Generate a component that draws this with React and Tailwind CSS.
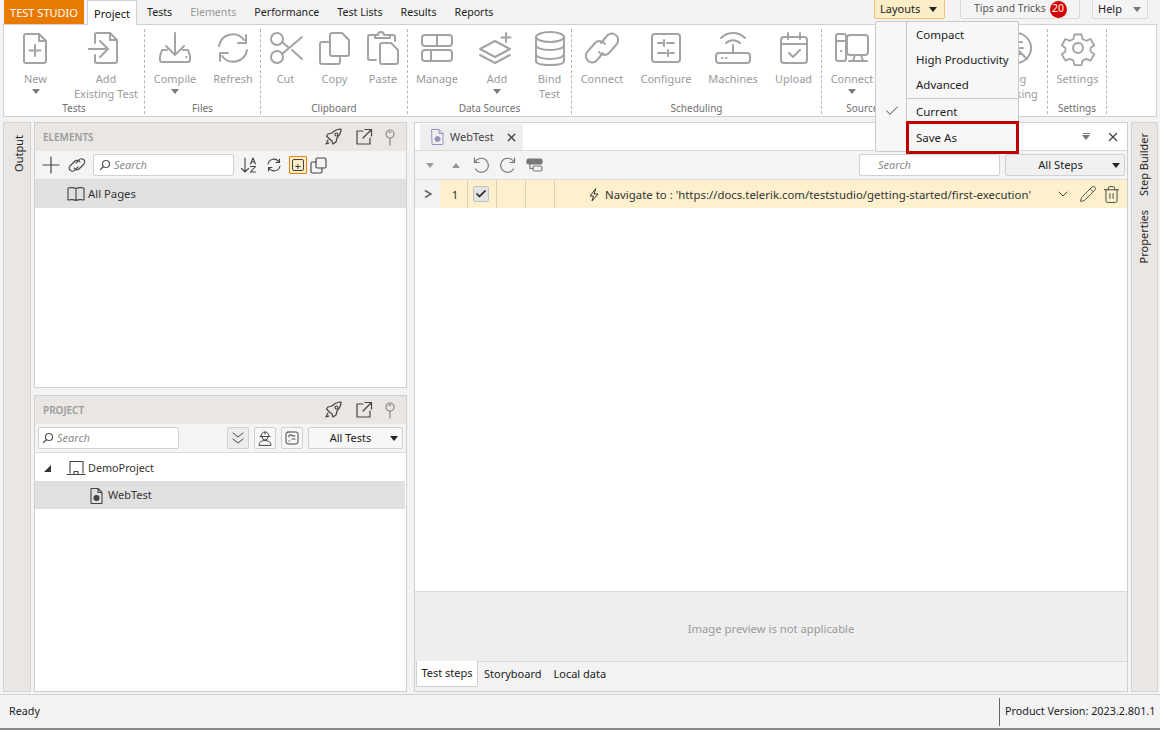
// App.jsx - Test Studio project ribbon with Layouts menu open
import React from "react";
import { ChevronDown, Check, Pencil, Trash2, X } from "lucide-react";

const Icon = ({ children, size = 36, vb = 36, className = "text-[#a3a3a3]", sw = 2 }) => (
  <svg
    width={size}
    height={size}
    viewBox={`0 0 ${vb} ${vb}`}
    fill="none"
    stroke="currentColor"
    strokeWidth={sw}
    strokeLinecap="round"
    strokeLinejoin="round"
    className={className}
  >
    {children}
  </svg>
);

const Caret = ({ className = "border-t-[#777]" }) => (
  <span className={`inline-block w-0 h-0 border-l-[4px] border-r-[4px] border-t-[5px] border-l-transparent border-r-transparent ${className}`} />
);

const icons = {
  new: (
    <>
      <path d="M8 4h13l7 7v20a2 2 0 0 1-2 2H8a2 2 0 0 1-2-2V6a2 2 0 0 1 2-2z" />
      <path d="M21 4v7h7M17 15v11M11.500 20.500h11" />
    </>
  ),
  existing: (
    <>
      <path d="M7 13V5a2 2 0 0 1 2-2h13l7 7v21a2 2 0 0 1-2 2H9a2 2 0 0 1-2-2v-6" />
      <path d="M22 3v7h7M-5 19h24M12 11l8 8-8 8" />
    </>
  ),
  compile: (
    <>
      <path d="M18 3v22M9 16l9 9 9-9" />
      <path d="M10 20H5l-2 6v4a2 2 0 0 0 2 2h26a2 2 0 0 0 2-2v-4l-2-6h-5" />
      <path d="M29 27h.5" />
    </>
  ),
  refresh: (
    <>
      <path d="M4 16A14 14 0 0 1 29 10M32 20A14 14 0 0 1 7 26" />
      <path d="M31 5v8h-8M5 31v-8h8" />
    </>
  ),
  cut: (
    <>
      <circle cx="9" cy="9" r="6" />
      <circle cx="9" cy="27" r="6" />
      <path d="M14 24L34 7M14 12l6 5M24 20l10 9" />
    </>
  ),
  copy: (
    <>
      <path d="M15 3h10l7 7v14a2 2 0 0 1-2 2H15a2 2 0 0 1-2-2V5a2 2 0 0 1 2-2z" />
      <path d="M13 12H5a2 2 0 0 0-2 2v18a2 2 0 0 0 2 2h16a2 2 0 0 0 2-2v-6" />
    </>
  ),
  paste: (
    <>
      <path d="M11 30H5a2 2 0 0 1-2-2V7a2 2 0 0 1 2-2h5M25 5h3a2 2 0 0 1 2 2v4" />
      <path d="M10 8V5h3a3 3 0 0 1 6 0h6v3z" />
      <path d="M17 13h9l7 7v12a2 2 0 0 1-2 2H17a2 2 0 0 1-2-2V15a2 2 0 0 1 2-2z" />
    </>
  ),
  manage: (
    <>
      <rect x="3" y="5" width="30" height="11" rx="3" />
      <rect x="3" y="20" width="30" height="11" rx="3" />
      <path d="M18 5v11M12 20v11" />
    </>
  ),
  add: (
    <>
      <path d="M16 11l15 8-15 8-15-8z" />
      <path d="M1 25l15 8 15-8M27 3v9M22.500 7.500h9" />
    </>
  ),
  bind: (
    <>
      <ellipse cx="18" cy="7" rx="14" ry="5" />
      <path d="M4 7v24c0 3 6 4 14 4s14-1 14-4V7M4 15c0 3 6 5 14 5s14-2 14-5M4 24c0 3 6 5 14 5s14-2 14-5" />
    </>
  ),
  connect: (
    <>
      <path d="M17 13l5-6a6.500 6.500 0 1 1 10 8l-7 8a6.500 6.500 0 0 1-10-1" />
      <path d="M19 23l-5 6a6.500 6.500 0 1 1-10-8l7-8a6.500 6.500 0 0 1 10 1" />
    </>
  ),
  configure: (
    <>
      <rect x="4" y="4" width="28" height="28" rx="3" />
      <path d="M10 13h5M19 13h7M16 10v6M10 23h8M22 23h4M20 20v6" />
    </>
  ),
  machines: (
    <>
      <rect x="1" y="23" width="34" height="10" rx="3" />
      <path d="M18 23v-8M11 13a10 10 0 0 1 14 0M6 8a17 17 0 0 1 24 0M7 28h.5M11 28h.5" />
    </>
  ),
  upload: (
    <>
      <rect x="5" y="7" width="26" height="26" rx="3" />
      <path d="M5 14h26M12 3v6M24 3v6M13 23l4 4 7-7" />
    </>
  ),
  machine: (
    <>
      <rect x="2" y="4" width="10" height="27" rx="2" />
      <path d="M2 11h10M7 21h.5" />
      <rect x="13" y="5" width="21" height="20" rx="3" />
      <path d="M21 25l-2 6M27 25l2 6M15 31h18" />
    </>
  ),
  bug: (
    <>
      <circle cx="18" cy="18" r="15" />
      <path d="M7 7l22 22M18 9v18M12 12l12 0M11 18h14M12 24h12" />
    </>
  ),
  settings: (
    <>
      <path d="M14 3h8l1 5 4 2 5-2 4 7-4 3v4l4 3-4 7-5-2-4 2-1 5h-8l-1-5-4-2-5 2-4-7 4-3v-4l-4-3 4-7 5 2 4-2z" transform="translate(1.800 1.800) scale(.9)" />
      <circle cx="18" cy="18" r="5" />
    </>
  ),
};

const groups = [
  {
    id: "tests",
    label: "Tests",
    width: "w-[141px]",
    items: [
      { icon: "new", lines: ["New"], caret: true, width: "w-[63px]" },
      { icon: "existing", lines: ["Add", "Existing Test"], width: "w-[78px]" },
    ],
  },
  {
    id: "files",
    label: "Files",
    width: "w-[116px]",
    items: [
      { icon: "compile", lines: ["Compile"], caret: true, width: "w-[60px]" },
      { icon: "refresh", lines: ["Refresh"], width: "w-[56px]" },
    ],
  },
  {
    id: "clipboard",
    label: "Clipboard",
    width: "w-[147px]",
    items: [
      { icon: "cut", lines: ["Cut"], width: "w-[49px]" },
      { icon: "copy", lines: ["Copy"], width: "w-[49px]" },
      { icon: "paste", lines: ["Paste"], width: "w-[48px]" },
    ],
  },
  {
    id: "data",
    label: "Data Sources",
    width: "w-[164px]",
    items: [
      { icon: "manage", lines: ["Manage"], width: "w-[58px]" },
      { icon: "add", lines: ["Add"], caret: true, width: "w-[62px]" },
      { icon: "bind", lines: ["Bind", "Test"], width: "w-[43px]" },
    ],
  },
  {
    id: "scheduling",
    label: "Scheduling",
    width: "w-[250px]",
    items: [
      { icon: "connect", lines: ["Connect"], width: "w-[60px]" },
      { icon: "configure", lines: ["Configure"], width: "w-[68px]" },
      { icon: "machines", lines: ["Machines"], width: "w-[66px]" },
      { icon: "upload", lines: ["Upload"], width: "w-[55px]" },
    ],
  },
  {
    id: "source",
    label: "Source Control",
    width: "w-[119px]",
    items: [{ icon: "machine", lines: ["Connect"], caret: true, width: "w-[60px]" }],
  },
  {
    id: "bugs",
    label: "",
    width: "w-[107px]",
    items: [{ icon: "bug", lines: ["Bug", "Tracking"], width: "w-[62px] ml-[44px]" }],
  },
  {
    id: "settings",
    label: "Settings",
    width: "w-[59px]",
    items: [{ icon: "settings", lines: ["Settings"], width: "w-[59px]" }],
  },
];

const tabs = ["Tests", "Elements", "Performance", "Test Lists", "Results", "Reports"];

const Rocket = () => (
  <Icon size={18} vb={18} sw={1.200} className="text-[#444]">
    <path d="M7 5c3-3 6-4 9-4 0 3-1 6-4 9l-1 4-3 2-1-3-3-2.500L1.500 8 3 6z" />
    <circle cx="11.500" cy="6.500" r="1.500" />
    <path d="M3 12l-2 4 3-1" />
  </Icon>
);

const PopOut = () => (
  <Icon size={18} vb={18} sw={1.200} className="text-[#444]">
    <path d="M8 3H2v13h13v-6M10 1.500h6.500V8M16 2L8 10" />
  </Icon>
);

const PinIcon = () => (
  <Icon size={18} vb={18} sw={1.200} className="text-[#888]">
    <circle cx="9" cy="6" r="4" />
    <path d="M9 10v7M8 4.500a2 2 0 0 1 2-.5" />
  </Icon>
);

const PanelHeader = ({ title }) => (
  <div className="h-[28px] shrink-0 flex items-center bg-[#e9e6e3] pl-[8px] pr-[7px]">
    <span className="text-[10px] font-semibold text-[#9b9b9b] flex-1">{title}</span>
    <div className="flex items-center">
      <Rocket />
      <span className="ml-[12px] flex"><PopOut /></span>
      <span className="ml-[8px] flex"><PinIcon /></span>
    </div>
  </div>
);

const SearchBox = ({ width, indent = "pl-[3px]" }) => (
  <div className={`${width} h-[22px] bg-white border border-[#d0d0d0] rounded-[2px] flex items-center ${indent} gap-[3px]`}>
    <Icon size={12} vb={12} sw={1.200} className="text-[#555]">
      <circle cx="7" cy="5" r="3.500" />
      <path d="M4.500 7.500L1.500 10.500" />
    </Icon>
    <span className="text-[11px] italic text-[#8a8a8a]">Search</span>
  </div>
);

const ElementsPanel = () => (
  <section className="h-[266px] shrink-0 bg-white border border-[#cfcfcf] flex flex-col">
    <PanelHeader title="ELEMENTS" />
    <div className="h-[29px] shrink-0 bg-[#f4f4f4] border-b border-[#dcdcdc] flex items-center pl-[7px]">
      <Icon size={18} vb={18} sw={1.200} className="text-[#444]">
        <path d="M9 1v16M1 9h16" />
      </Icon>
      <span className="ml-[7px]">
        <Icon size={20} vb={20} sw={1.100} className="text-[#444]">
          <path d="M9 8l3-3a3.200 3.200 0 1 1 5 4l-5 5a3.200 3.200 0 0 1-5-1" />
          <path d="M11 12l-3 3a3.200 3.200 0 1 1-5-4l5-5a3.200 3.200 0 0 1 5 1" />
        </Icon>
      </span>
      <div className="ml-[6px]"><SearchBox width="w-[141px]" indent="pl-[5px]" /></div>
      <span className="ml-[6px] flex items-center">
        <Icon size={18} vb={18} sw={1.100} className="text-[#444]">
          <path d="M5 2v14M1.500 12.500L5 16l3.500-3.500" />
          <path d="M10.500 8l2.500-6 2.500 6M11.500 6h3M10.500 10.500h5l-5 5.500h5" />
        </Icon>
      </span>
      <span className="ml-[8px] flex items-center">
        <Icon size={16} vb={16} sw={1.100} className="text-[#444]">
          <path d="M2 7a6 6 0 0 1 11-2M14 9a6 6 0 0 1-11 2M13.500 2v3.500H10M2.500 14v-3.500H6" />
        </Icon>
      </span>
      <span className="ml-[7px] w-[18px] h-[18px] border border-[#e8820c] bg-[#fbeec6] rounded-[1px] flex items-center justify-center">
        <span className="w-[12px] h-[12px] border border-[#444] rounded-[2px] flex items-center justify-center text-[11px] leading-none text-[#333]">+</span>
      </span>
      <span className="ml-[3px] flex items-center">
        <Icon size={17} vb={17} sw={1.100} className="text-[#444]">
          <rect x="6" y="1" width="10" height="10" rx="1.500" />
          <path d="M6 5H2.500A1.500 1.500 0 0 0 1 6.500v8A1.500 1.500 0 0 0 2.500 16h8a1.500 1.500 0 0 0 1.500-1.500V11" />
        </Icon>
      </span>
    </div>
    <div className="h-[28px] shrink-0 bg-[#e0e0e0] flex items-center pl-[31px] text-[11.300px] text-[#333]">
      <Icon size={20} vb={20} sw={1.100} className="text-[#444]">
        <path d="M10 4.500C8 3.500 5 3.500 2 4v12c3-.5 6-.5 8 .5 2-1 5-1 8-.5V4c-3-.5-6-.5-8 .5zM10 4.500v12" />
      </Icon>
      <span className="ml-[2px]">All Pages</span>
    </div>
  </section>
);

const ProjectBtn = ({ children, active }) => (
  <span className={`w-[22px] h-[22px] border border-[#d0d0d0] rounded-[2px] flex items-center justify-center ${active ? "bg-[#ececec]" : "bg-[#f7f7f7]"}`}>
    {children}
  </span>
);

const ProjectPanel = () => (
  <section className="flex-1 mt-[7px] bg-white border border-[#cfcfcf] flex flex-col">
    <PanelHeader title="PROJECT" />
    <div className="h-[29px] shrink-0 bg-[#f4f4f4] border-b border-[#dcdcdc] flex items-center pl-[3px]">
      <SearchBox width="w-[141px]" />
      <div className="ml-[48px] flex items-center gap-[5px]">
        <ProjectBtn active>
          <Icon size={16} vb={16} sw={1} className="text-[#444]">
            <path d="M3 3l5 4 5-4M3 9l5 4 5-4" />
          </Icon>
        </ProjectBtn>
        <ProjectBtn>
          <Icon size={18} vb={18} sw={1} className="text-[#444]">
            <path d="M5 7a4 4 0 0 1 8 0M4 7.500h10M6 8a3 3 0 0 0 6 0M3 16c0-3 3-4.500 6-4.500s6 1.500 6 4.500zM9 3v2" />
          </Icon>
        </ProjectBtn>
        <ProjectBtn>
          <Icon size={16} vb={16} sw={1} className="text-[#444]">
            <rect x="2" y="2" width="12" height="12" rx="2" />
            <path d="M5 7V5h3v1h3M5 11h.5M8 9h3" />
          </Icon>
        </ProjectBtn>
        <div className="w-[95px] h-[22px] border border-[#d0d0d0] bg-[#f7f7f7] rounded-[2px] flex items-center text-[11px] text-[#222]">
          <span className="flex-1 text-center pl-[2px]">All Tests</span>
          <span className="mr-[4px] flex"><Caret className="border-t-[#222]" /></span>
        </div>
      </div>
    </div>
    <div className="h-[28px] shrink-0 flex items-center pl-[9px] pt-[2px] text-[10.800px] text-[#333]">
      <span className="w-0 h-0 border-b-[7px] border-l-[7px] border-b-[#333] border-l-transparent" />
      <span className="ml-[15px] flex">
        <Icon size={20} vb={20} sw={1.100} className="text-[#444]">
          <path d="M4 15V3.500h13V15M1 16.500h18M8 16v-2.500h4V16" />
        </Icon>
      </span>
      <span className="ml-[2px]">DemoProject</span>
    </div>
    <div className="h-[28px] shrink-0 bg-[#e0e0e0] mr-[1px] flex items-center pl-[52px] pt-[1px] text-[11px] text-[#333]">
      <Icon size={18} vb={18} sw={1.100} className="text-[#444]">
        <path d="M4 1.500h7l4 4V16a.500.500 0 0 1-.500.500h-10A.500.500 0 0 1 4 16zM11 1.500v4h4" />
        <circle cx="9.500" cy="11" r="2.500" fill="currentColor" />
      </Icon>
      <span className="ml-[3px]">WebTest</span>
    </div>
  </section>
);

const TestStepRow = () => (
  <div className="h-[28px] shrink-0 flex items-stretch text-[11.400px] text-[#333]">
    <div className="w-[25px] bg-[#f3f3f3] flex items-center justify-center text-[#666]">
      <svg width="10" height="10" viewBox="0 0 10 10" fill="none" stroke="currentColor" strokeWidth="1.500"><path d="M2 1.500L8 5l-6 3.500" /></svg>
    </div>
    <div className="flex-1 bg-[#fdf0cd] flex items-stretch">
      <div className="w-[28px] border-r border-[#d9d0b8] flex items-center justify-center pl-[3px] pt-[1px]">1</div>
      <div className="w-[29px] border-r border-[#d9d0b8] flex items-center justify-center pr-[3px]">
        <span className="w-[16px] h-[16px] bg-[#e4e4e4] border border-[#c2c2c2] rounded-[2px] flex items-center justify-center">
          <Check size={12} strokeWidth={3.500} className="text-[#222]" />
        </span>
      </div>
      <div className="w-[29px] border-r border-[#d9d0b8]" />
      <div className="w-[29px] border-r border-[#d9d0b8]" />
      <div className="flex-1 flex items-center pl-[32px] pt-[1px]">
        <Icon size={14} vb={14} sw={1} className="text-[#333]">
          <path d="M8.500 1L3 8h3.500L5 13l6-7H7.500z" />
        </Icon>
        <span className="ml-[4px] whitespace-nowrap">Navigate to : 'https://docs.telerik.com/teststudio/getting-started/first-execution'</span>
      </div>
      <div className="flex items-center pr-[6px] text-[#444]">
        <ChevronDown size={16} strokeWidth={1.500} />
        <Pencil size={18} strokeWidth={1.200} className="ml-[8px]" />
        <Trash2 size={19} strokeWidth={1.200} className="ml-[5px]" />
      </div>
    </div>
  </div>
);

const MainPanel = () => (
  <section className="flex-1 bg-white border border-[#cfcfcf] flex flex-col">
    <div className="h-[28px] shrink-0 flex items-end pl-[5px] border-b border-[#d8d8d8]">
      <div className="h-[26px] w-[103px] bg-[#eeeeee] flex items-center pl-[8px] text-[11px] text-[#444]">
        <Icon size={18} vb={18} sw={1} className="text-[#9a8fc0]">
          <path d="M4 1.500h7l4 4V16a.500.500 0 0 1-.500.500h-10A.500.500 0 0 1 4 16zM11 1.500v4h4" />
          <circle cx="9.500" cy="11" r="2.500" fill="currentColor" />
        </Icon>
        <span className="ml-[4px]">WebTest</span>
        <X size={13} strokeWidth={2.500} className="ml-[11px] text-[#444]" />
      </div>
      <div className="flex-1 h-full flex items-center justify-end pr-[7px] gap-[16px] text-[#555]">
        <span className="flex flex-col items-center gap-[1px]">
          <span className="w-[7px] h-px bg-[#777]" />
          <Caret />
        </span>
        <X size={14} strokeWidth={2.200} className="text-[#444]" />
      </div>
    </div>
    <div className="h-[29px] shrink-0 bg-[#f4f4f4] border-b border-[#dcdcdc] flex items-center pl-[11px] pr-[2px]">
      <Caret className="border-t-[#999]" />
      <span className="ml-[18px] rotate-180 flex"><Caret className="border-t-[#999]" /></span>
      <span className="ml-[12px] flex">
        <Icon size={18} vb={18} sw={1.200} className="text-[#777]">
          <path d="M3 6.500A7 7 0 1 1 3.500 13M2.500 2v4.500H7" />
        </Icon>
      </span>
      <span className="ml-[9px] flex">
        <Icon size={18} vb={18} sw={1.200} className="text-[#777]">
          <path d="M15 6.500A7 7 0 1 0 14.500 13M15.500 2v4.500H11" />
        </Icon>
      </span>
      <span className="ml-[9px] flex">
        <Icon size={17} vb={17} sw={1.200} className="text-[#777]">
          <rect x="1" y="2" width="15" height="5" rx="1.500" fill="currentColor" />
          <rect x="7" y="9" width="9" height="5" rx="1.500" />
          <path d="M4 7v4.500h3" />
        </Icon>
      </span>
      <div className="ml-auto w-[141px] h-[22px] bg-white border border-[#d0d0d0] rounded-[2px] pl-[18px] flex items-center text-[11px] italic text-[#8a8a8a]">Search</div>
      <div className="ml-[5px] w-[120px] h-[22px] bg-[#f0f0f0] border border-[#d0d0d0] rounded-[2px] flex items-center text-[11.200px] text-[#222]">
        <span className="flex-1 text-center pl-[3px]">All Steps</span>
        <span className="mr-[4px] flex"><Caret className="border-t-[#222]" /></span>
      </div>
    </div>
    <TestStepRow />
    <div className="flex-1" />
    <div className="h-[70px] shrink-0 bg-[#eeeeee] border-t border-[#dcdcdc] pt-[5px] flex items-center justify-center text-[11.250px] text-[#9a9a9a]">
      Image preview is not applicable
    </div>
    <div className="h-[30px] shrink-0 bg-[#f3f3f3] border-t border-[#d8d8d8] flex items-stretch pl-[1px] text-[11px] text-[#222]">
      <div className="w-[62px] -mt-px mb-[4px] bg-white border border-t-0 border-[#d0d0d0] flex items-center justify-center">Test steps</div>
      <div className="ml-[6px] flex items-center pb-[4px]">Storyboard</div>
      <div className="ml-[12px] flex items-center pb-[4px]">Local data</div>
    </div>
  </section>
);

const SideTab = ({ label, className = "" }) => (
  <span className={`[writing-mode:vertical-rl] rotate-180 text-[11px] text-[#222] ${className}`}>{label}</span>
);

const LayoutsMenu = () => (
  <div className="absolute left-[875px] top-[21px] w-[144px] h-[131px] bg-[#f7f7f7] border border-[#c8c8c8] rounded-[2px] flex text-[11.500px] text-[#222] z-10">
    <div className="w-[31px] shrink-0 border-r border-[#c8c8c8] relative">
      <Check size={16} strokeWidth={1.500} className="absolute left-[8px] top-[81px] text-[#444]" />
    </div>
    <div className="flex-1 flex flex-col pl-[9px]">
      <div className="h-[25px] flex items-center">Compact</div>
      <div className="h-[25px] flex items-center whitespace-nowrap">High Productivity</div>
      <div className="h-[25px] flex items-center">Advanced</div>
      <div className="h-px bg-[#c8c8c8] -ml-[9px] mt-[1px]" />
      <div className="h-[25px] flex items-center">Current</div>
      <div className="h-[25px] flex items-center mt-[1px]">Save As</div>
    </div>
    <div className="absolute left-[30px] top-[99px] w-[113px] h-[33px] border-[3px] border-[#c00000]" />
  </div>
);

export default function App() {
  return (
    <div
      className="relative w-[1160px] h-[730px] overflow-hidden bg-[#f3f3f3] flex flex-col"
      style={{ fontFamily: '"Noto Sans", "Open Sans", sans-serif' }}
    >
      {/* Tabs */}
      <div className="h-[24px] shrink-0 flex items-stretch pl-[4px] text-[11px] text-[#222]">
        <div className="w-[80px] bg-[#e87a00] text-white flex items-center justify-center pt-[2px]">TEST STUDIO</div>
        <div className="ml-[3px] w-[50px] h-[25px] bg-white border border-b-0 border-[#d0d0d0] flex items-center justify-center z-[1] text-[#111] pt-[2px]">Project</div>
        <div className="flex items-center pt-[2px] pl-[1px] text-[10.650px]">
          {tabs.map((tab) => (
            <span key={tab} className={`px-[9px] ${tab === "Elements" ? "text-[#999]" : ""}`}>{tab}</span>
          ))}
        </div>
        <div className="ml-auto flex items-start">
          <div className="w-[71px] h-[20px] -mt-px bg-[#fbeec6] border border-[#efc078] rounded-b-[2px] flex items-center pl-[5px]">
            Layouts
            <span className="ml-auto mr-[7px] flex"><Caret className="border-t-[#222]" /></span>
          </div>
          <div className="ml-[15px] w-[120px] h-[20px] -mt-px bg-[#f4f4f4] border border-[#d8d8d8] rounded-b-[2px] flex items-center pl-[13px] text-[10.400px] text-[#555]">
            Tips and Tricks
            <span className="ml-[4px] w-[17px] h-[17px] rounded-full bg-[#d40000] text-white text-[10.500px] flex items-center justify-center">20</span>
          </div>
          <div className="ml-[12px] w-[56px] h-[20px] -mt-px mr-[12px] bg-[#f4f4f4] border border-[#d8d8d8] rounded-b-[2px] flex items-center pl-[5px]">
            Help
            <span className="ml-auto mr-[6px] flex"><Caret /></span>
          </div>
        </div>
      </div>

      {/* Ribbon */}
      <div className="h-[93px] shrink-0 mx-[3px] bg-white border border-[#d0d0d0] flex">
        {groups.map((group) => (
          <div key={group.id} className={`${group.width} shrink-0 border-r border-dashed border-[#b5b5b5] mt-[4px] mb-[2px] flex flex-col`}>
            <div className="flex-1 flex">
              {group.items.map((item) => (
                <div key={item.icon} className={`${item.width} shrink-0 flex flex-col items-center pt-[1px] text-[11px] leading-[15px] text-[#9a9a9a]`}>
                  <Icon>{icons[item.icon]}</Icon>
                  <span className="mt-[5px]">{item.lines[0]}</span>
                  {item.lines[1] && <span className="whitespace-nowrap">{item.lines[1]}</span>}
                  {item.caret && <span className="flex mt-[3px]"><Caret /></span>}
                </div>
              ))}
            </div>
            <div className="h-[13px] text-center text-[10px] leading-[14px] text-[#6f6f6f]">{group.label}</div>
          </div>
        ))}
      </div>

      {/* Workspace */}
      <div className="flex-1 min-h-0 mt-[5px] flex pl-[3px] pr-[2px]">
        <aside className="w-[28px] shrink-0 bg-[#e9e6e3] border border-[#d4d4d4] flex flex-col items-center pt-[12px] pl-[4px]">
          <SideTab label="Output" />
        </aside>
        <div className="w-[373px] shrink-0 ml-[3px] flex flex-col">
          <ElementsPanel />
          <ProjectPanel />
        </div>
        <div className="flex-1 min-w-0 ml-[7px] flex">
          <MainPanel />
        </div>
        <aside className="w-[27px] shrink-0 ml-[3px] bg-[#e9e6e3] border border-[#d4d4d4] flex flex-col items-center pt-[10px] gap-[14px]">
          <SideTab label="Step Builder" />
          <SideTab label="Properties" />
        </aside>
      </div>

      {/* Status bar */}
      <div className="h-[36px] shrink-0 mt-[2px] bg-[#f3f3f3] border-t border-[#d0d0d0] border-b-2 border-b-[#8a8a8a] flex items-center pl-[9px] text-[10.800px] text-[#222]">
        <span>Ready</span>
        <div className="ml-auto w-[161px] h-[28px] border-l border-[#666] flex items-center pl-[5px]">Product Version: 2023.2.801.1</div>
      </div>

      <LayoutsMenu />
    </div>
  );
}
